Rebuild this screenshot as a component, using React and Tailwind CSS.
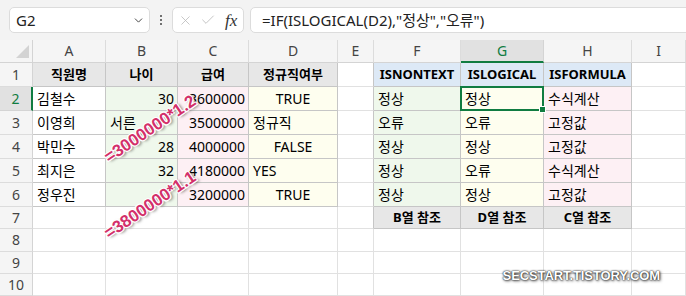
import React from 'react';
import { X, Check, ChevronDown } from 'lucide-react';

const FONT = "font-['Noto_Sans','Noto_Sans_CJK_KR',sans-serif]";

const TT = 'border-r border-b border-r-[#c6c6c6] border-b-[#c6c6c6]';
const TG = 'border-r border-b border-r-[#c6c6c6] border-b-[#e1e1e1]';
const GG = 'border-r border-b border-r-[#e1e1e1] border-b-[#e1e1e1]';

const HDR = 'bg-[#e7e7e7]';
const BLUE = 'bg-[#dde9f6]';
const GREEN = 'bg-[#eff8ec]';
const PINK = 'bg-[#fdf0f4]';
const YEL = 'bg-[#fefeef]';
const WHITE = 'bg-white';

const L = 'justify-start pl-[4px]';
const R = 'justify-end pr-[3px]';
const C = 'justify-center';

const c = (t, bg, al, bd, bold = false, sel = false) => ({ t, bg, al, bd, bold, sel });
const empty = (bd = GG) => c('', WHITE, L, bd);

const rows = [
  [
    c('직원명', HDR, C, TT, true), c('나이', HDR, C, TT, true), c('급여', HDR, C, TT, true), c('정규직여부', HDR, C, TT, true),
    empty(TG),
    c('ISNONTEXT', BLUE, C, TT, true), c('ISLOGICAL', BLUE, C, TT, true), c('ISFORMULA', BLUE, C, TT, true),
    empty(),
  ],
  [
    c('김철수', WHITE, L, TT), c('30', GREEN, R, TT), c('3600000', PINK, R, TT), c('TRUE', YEL, C, TT),
    empty(TG),
    c('정상', GREEN, L, TT), c('정상', YEL, L, TT, false, true), c('수식계산', PINK, L, TT),
    empty(),
  ],
  [
    c('이영희', WHITE, L, TT), c('서른', GREEN, L, TT), c('3500000', PINK, R, TT), c('정규직', YEL, L, TT),
    empty(TG),
    c('오류', GREEN, L, TT), c('오류', YEL, L, TT), c('고정값', PINK, L, TT),
    empty(),
  ],
  [
    c('박민수', WHITE, L, TT), c('28', GREEN, R, TT), c('4000000', PINK, R, TT), c('FALSE', YEL, C, TT),
    empty(TG),
    c('정상', GREEN, L, TT), c('정상', YEL, L, TT), c('고정값', PINK, L, TT),
    empty(),
  ],
  [
    c('최지은', WHITE, L, TT), c('32', GREEN, R, TT), c('4180000', PINK, R, TT), c('YES', YEL, L, TT),
    empty(TG),
    c('정상', GREEN, L, TT), c('오류', YEL, L, TT), c('수식계산', PINK, L, TT),
    empty(),
  ],
  [
    c('정우진', WHITE, L, TT), c('', GREEN, R, TT), c('3200000', PINK, R, TT), c('TRUE', YEL, C, TT),
    empty(TG),
    c('정상', GREEN, L, TT), c('정상', YEL, L, TT), c('고정값', PINK, L, TT),
    empty(),
  ],
  [
    empty(), empty(), empty(), empty(),
    empty(TG),
    c('B열 참조', HDR, C, TT, true), c('D열 참조', HDR, C, TT, true), c('C열 참조', HDR, C, TT, true),
    empty(),
  ],
  Array.from({ length: 9 }, () => empty()),
  Array.from({ length: 9 }, () => empty()),
  Array.from({ length: 9 }, () => empty()),
];

const cols = ['A', 'B', 'C', 'D', 'E', 'F', 'G', 'H', 'I'];

function Cell({ d }) {
  return (
    <div
      className={`relative flex items-center overflow-visible whitespace-nowrap leading-none text-black ${d.bg} ${d.al} ${d.bd} ${
        d.bold ? 'text-[13px] font-bold' : 'text-[14px]'
      }`}
    >
      {d.t}
      {d.sel && (
        <div className="absolute -left-px -top-px -right-px -bottom-px z-10 border-2 border-[#107c41]">
          <div className="absolute -right-[4px] -bottom-[4px] h-[7px] w-[7px] border border-white bg-[#107c41]" />
        </div>
      )}
    </div>
  );
}

function FormulaBar() {
  return (
    <div className="flex h-[40px] items-center bg-[#f3f3f3] pl-[9px] overflow-hidden">
      <div className="flex h-[26px] w-[141px] items-center justify-between rounded-[5px] border border-[#dcdcdc] bg-white pl-[6px] pr-[4px] text-[15px] text-[#222]">
        <span className="leading-none">G2</span>
        <ChevronDown size={13} strokeWidth={1.8} className="text-[#444]" />
      </div>
      <div className="flex w-[22px] flex-col items-center justify-center gap-[2px]">
        <div className="h-[2px] w-[2px] rounded-full bg-[#444]" />
        <div className="h-[2px] w-[2px] rounded-full bg-[#444]" />
        <div className="h-[2px] w-[2px] rounded-full bg-[#444]" />
      </div>
      <div className="flex h-[26px] w-[72px] items-center rounded-[5px] border border-[#dcdcdc] bg-white pl-[5px]">
        <X size={15} strokeWidth={1.2} className="text-[#b5b5b5]" />
        <Check size={16} strokeWidth={1.2} className="ml-[7px] text-[#b5b5b5]" />
        <span className="ml-[9px] font-['Liberation_Serif',serif] text-[17px] italic leading-none text-[#333]">fx</span>
      </div>
      <div className="ml-[6px] -mr-[8px] flex h-[26px] flex-1 items-center rounded-[5px] border border-[#dcdcdc] bg-white pl-[11px] text-[15px] text-[#222]">
        <span className="leading-none whitespace-nowrap">=IF(ISLOGICAL(D2),"정상","오류")</span>
      </div>
    </div>
  );
}

function Sheet() {
  return (
    <div className="relative h-[256px] overflow-hidden">
      <div className="grid grid-cols-[33px_73px_72px_71px_89px_36px_87px_83px_88px_1fr] grid-rows-[23px_24px_24px_24px_24px_24px_24px_22px_23px_22px_22px]">
        {/* corner */}
        <div className="relative border-r border-b border-[#d4d4d4] bg-[#f5f5f5]">
          <svg className="absolute right-[3px] bottom-[4px]" width="13" height="13" viewBox="0 0 13 13">
            <polygon points="13,0 13,13 0,13" fill="#d3d3d3" />
          </svg>
        </div>
        {cols.map((l) =>
          l === 'G' ? (
            <div
              key={l}
              className="flex items-center justify-center border-r border-r-[#d4d4d4] border-b-2 border-b-[#107c41] bg-[#e1e1e1] text-[14px] leading-none text-[#107c41]"
            >
              {l}
            </div>
          ) : (
            <div
              key={l}
              className="flex items-center justify-center border-r border-b border-r-[#dcdcdc] border-b-[#d4d4d4] bg-[#f5f5f5] text-[14px] leading-none text-[#444]"
            >
              {l}
            </div>
          )
        )}
        {rows.map((r, i) => (
          <React.Fragment key={i}>
            {i === 1 ? (
              <div className="flex items-center justify-center border-r-2 border-b border-r-[#107c41] border-b-[#d4d4d4] bg-[#e1e1e1] text-[14px] leading-none text-[#107c41]">
                {i + 1}
              </div>
            ) : (
              <div className="flex items-center justify-center border-r border-b border-r-[#d4d4d4] border-b-[#dcdcdc] bg-[#f5f5f5] text-[14px] leading-none text-[#444]">
                {i + 1}
              </div>
            )}
            {r.map((d, j) => (
              <Cell key={j} d={d} />
            ))}
          </React.Fragment>
        ))}
      </div>

      <div className="pointer-events-none absolute left-[150px] top-[89px] -translate-x-1/2 -translate-y-1/2 rotate-[-34deg] whitespace-nowrap font-['Liberation_Sans',sans-serif] text-[17px] font-bold leading-none text-[#d3306a] [text-shadow:-1px_-1px_0_#fff,1px_-1px_0_#fff,-1px_1px_0_#fff,1px_1px_0_#fff,0_0_2px_#fff,2px_2px_3px_rgba(0,0,0,0.55)]">
        =3000000*1.2
      </div>
      <div className="pointer-events-none absolute left-[150px] top-[165px] -translate-x-1/2 -translate-y-1/2 rotate-[-34deg] whitespace-nowrap font-['Liberation_Sans',sans-serif] text-[17px] font-bold leading-none text-[#d3306a] [text-shadow:-1px_-1px_0_#fff,1px_-1px_0_#fff,-1px_1px_0_#fff,1px_1px_0_#fff,0_0_2px_#fff,2px_2px_3px_rgba(0,0,0,0.55)]">
        =3800000*1.1
      </div>
      <div className="pointer-events-none absolute right-[26px] top-[229px] whitespace-nowrap font-['Liberation_Sans',sans-serif] text-[13px] font-bold leading-none tracking-[-0.1px] text-white [text-shadow:0_0_1px_#222,0_0_2px_#333,1px_1px_3px_#444]">
        SECSTART.TISTORY.COM
      </div>
    </div>
  );
}

export default function App() {
  return (
    <div className={`h-[296px] w-[686px] overflow-hidden bg-white ${FONT}`}>
      <FormulaBar />
      <Sheet />
    </div>
  );
}
